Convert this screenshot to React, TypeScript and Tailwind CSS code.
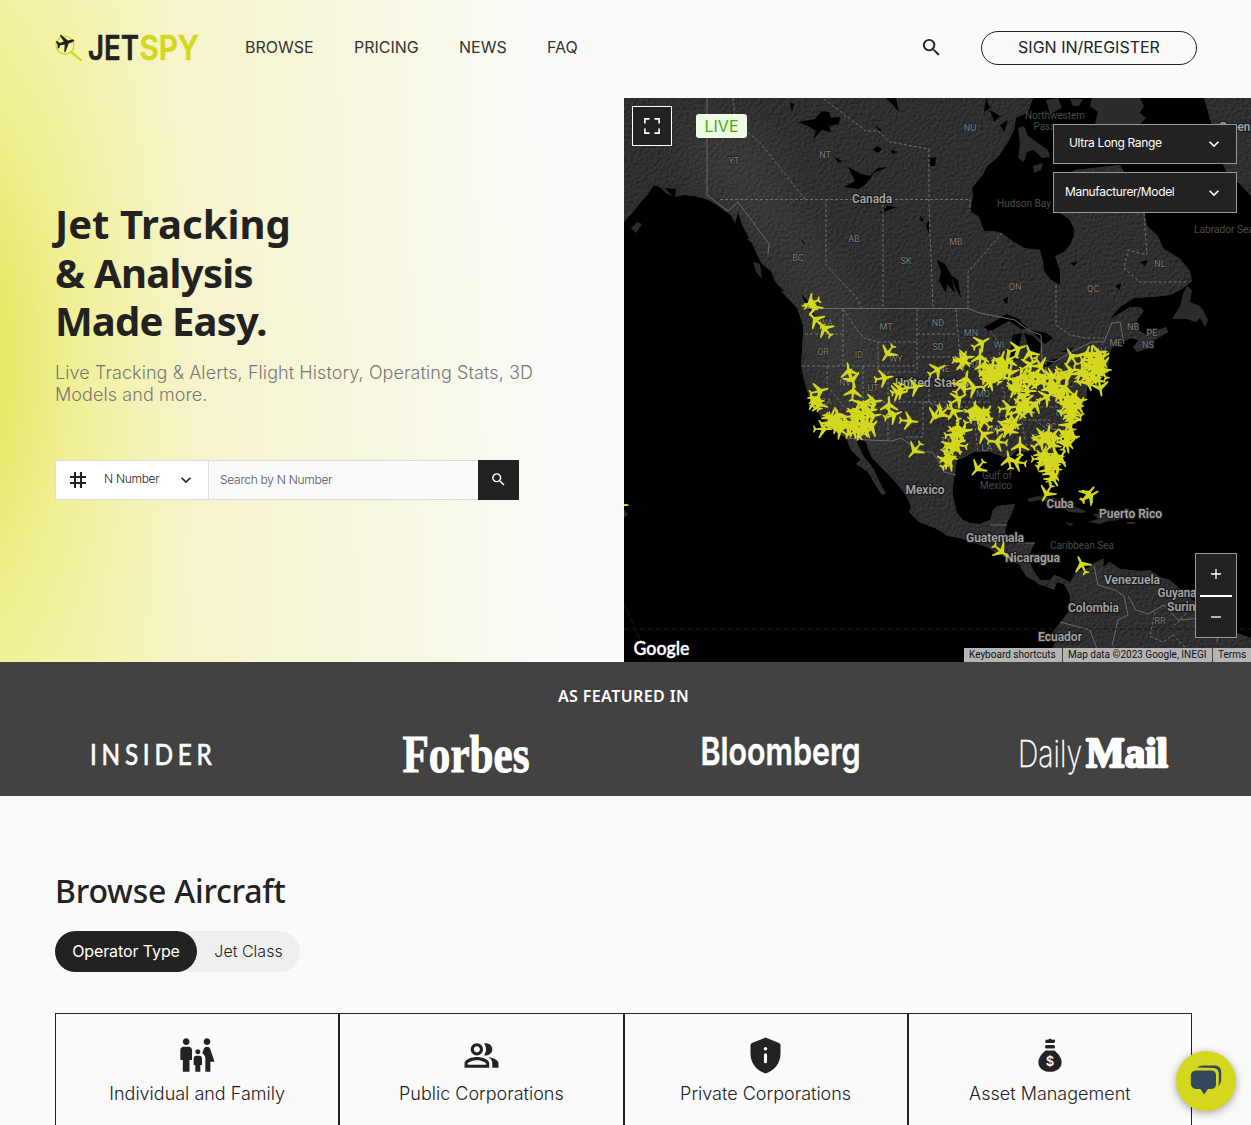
import React from "react";
import {
  MdSearch,
  MdTag,
  MdKeyboardArrowDown,
  MdFamilyRestroom,
  MdOutlinePeopleAlt,
} from "react-icons/md";

// Aircraft positions on the map canvas: x, y, heading in degrees.
const planes: [number, number, number][] = [
  [811, 303, 250], [814, 307, 95], [816, 320, 315], [825, 329, 320], [888, 353, 215],
  [849, 372, 350], [852, 379, 160], [853, 392, 5], [884, 378, 80], [898, 392, 200], [900, 390, 70],
  [915, 387, 80], [937, 370, 60], [819, 391, 75], [817, 399, 30], [815, 402, 330], [819, 404, 110],
  [823, 429, 90], [831, 418, 20], [834, 421, 50], [836, 419, 120], [837, 425, 200], [840, 423, 80],
  [841, 430, 310], [833, 424, 260], [838, 416, 340], [845, 422, 90], [847, 426, 60], [830, 422, 150],
  [852, 426, 20], [855, 429, 290], [857, 424, 0], [858, 431, 70], [862, 426, 120], [864, 430, 30], [866, 424, 200],
  [856, 411, 20], [862, 406, 60], [866, 404, 290], [868, 411, 80], [860, 416, 320], [873, 402, 80], [853, 416, 80],
  [872, 416, 80], [889, 406, 0], [893, 415, 70], [909, 421, 95], [915, 450, 220], [871, 428, 40],
  [935, 415, 210], [942, 413, 230], [954, 412, 330], [958, 399, 60], [961, 386, 40], [966, 380, 10], [973, 388, 80],
  [957, 429, 10], [954, 434, 80], [960, 434, 150], [956, 441, 200], [950, 446, 50], [958, 445, 280], [948, 457, 350],
  [953, 449, 110], [949, 462, 50], [946, 460, 180], [963, 430, 200],
  [963, 360, 20], [965, 358, 80], [962, 362, 100], [980, 358, 0], [981, 343, 60],
  [984, 367, 10], [988, 372, 80], [991, 368, 130], [986, 376, 200], [994, 376, 320], [989, 382, 45], [996, 372, 280],
  [999, 365, 80], [1001, 360, 20], [1005, 365, 60], [1009, 360, 240], [1000, 376, 110], [992, 379, 90], [1004, 370, 350],
  [1017, 349, 70], [1030, 354, 340], [1040, 365, 150], [1018, 386, 90], [1021, 378, 0], [1025, 376, 260],
  [1032, 377, 80], [1037, 374, 280], [1043, 379, 60], [1050, 378, 80], [1054, 376, 210], [1059, 378, 90], [1014, 389, 200],
  [1016, 382, 50], [1030, 382, 20], [1038, 382, 110], [1065, 376, 50], [1070, 371, 80],
  [1072, 357, 330], [1086, 355, 20], [1092, 355, 0], [1098, 353, 80], [1101, 360, 30], [1102, 364, 160], [1102, 371, 330],
  [1082, 372, 110], [1087, 366, 210], [1092, 368, 60], [1095, 362, 280], [1086, 377, 50], [1092, 376, 40], [1099, 373, 80],
  [1088, 382, 160], [1100, 387, 170], [1080, 374, 20], [1096, 379, 220], [1101, 358, 60], [1096, 370, 130], [1090, 360, 90],
  [1046, 397, 60], [1052, 391, 30], [1058, 392, 80], [1065, 389, 10], [1056, 385, 210], [1061, 397, 280], [1050, 386, 130],
  [1067, 398, 110], [1074, 399, 20], [1078, 401, 80], [1072, 406, 200], [1068, 409, 60], [1075, 410, 310],
  [1071, 414, 350], [1078, 405, 150], [1070, 402, 270], [1066, 405, 40], [1072, 421, 190], [1068, 426, 30], [1069, 433, 10],
  [1065, 436, 70], [1070, 437, 200], [1066, 442, 20], [1067, 444, 170], [1073, 416, 120],
  [1008, 408, 80], [1021, 396, 330], [1026, 401, 50], [1029, 408, 160], [1035, 405, 40], [1025, 411, 100], [1019, 411, 250], [1027, 391, 90],
  [974, 410, 10], [977, 415, 60], [981, 416, 130], [983, 419, 210], [979, 411, 80], [986, 414, 30], [984, 421, 320], [972, 414, 300],
  [984, 435, 320], [998, 442, 275], [1009, 422, 20], [1012, 426, 80], [1005, 428, 70], [1014, 421, 150], [1009, 430, 220],
  [1020, 446, 0], [1009, 460, 350], [1017, 462, 280], [978, 468, 220], [1042, 436, 80], [1046, 440, 150], [1048, 434, 10],
  [1053, 437, 280], [1040, 442, 50], [1052, 444, 220], [1043, 455, 20], [1048, 458, 80], [1055, 455, 100], [1060, 459, 30],
  [1045, 463, 60], [1051, 465, 200], [1056, 462, 340], [1041, 459, 90], [1052, 474, 20], [1053, 478, 150], [1048, 470, 260],
  [1047, 493, 210], [1088, 494, 40], [1090, 496, 60], [1001, 551, 130], [1082, 565, 335],
  [619, 505, 90], [1022, 404, 190], [1029, 365, 60], [1010, 372, 190],
];

const stateLabels: [string, number, number][] = [
  ["YT", 734, 164], ["NT", 825, 158], ["NU", 970, 131], ["AB", 854, 242], ["BC", 798, 261], ["SK", 906, 264],
  ["MB", 956, 245], ["ON", 1015, 290], ["QC", 1093, 292], ["NL", 1160, 267], ["NB", 1133, 330], ["PE", 1152, 336],
  ["NS", 1148, 348], ["ME", 1116, 346], ["MT", 886, 330], ["ND", 938, 326], ["SD", 938, 350], ["MN", 971, 336],
  ["WI", 999, 348], ["OR", 823, 355], ["ID", 859, 358], ["WY", 896, 362], ["NE", 944, 372], ["IA", 976, 368],
  ["NV", 845, 386], ["UT", 873, 391], ["CA", 826, 405], ["WA", 826, 326], ["MO", 983, 397], ["TX", 946, 444],
  ["MS", 997, 432], ["LA", 987, 451], ["SC", 1051, 430], ["GA", 1038, 441], ["NC", 1062, 416], ["NH", 1100, 354], ["RR", 1160, 624],
];

const countryLabels: [string, number, number, number][] = [
  ["Canada", 872, 202, 40], ["United States", 932, 386, 74], ["Mexico", 925, 493, 39], ["Cuba", 1060, 507, 27],
  ["Puerto Rico", 1130.5, 517, 63], ["Guatemala", 995, 541, 58], ["Nicaragua", 1032.5, 561, 55],
  ["Venezuela", 1132, 583, 56], ["Colombia", 1093.5, 611, 51], ["Ecuador", 1060, 640, 44],
  ["Guyana", 1177, 596, 39], ["Suriname", 1193, 610, 52], ["Greenland", 1246, 130, 54],
];

const waterLabels: [string, number, number, number][] = [
  ["Northwestern", 1055, 118, 60], ["Passages", 1055, 129, 43], ["Hudson Bay", 1024, 206, 54],
  ["Labrador Sea", 1224, 232, 60], ["Gulf of", 997, 478, 30], ["Mexico", 996, 488, 32], ["Caribbean Sea", 1082, 548, 64],
];

function FlightMap() {
  return (
    <svg viewBox="624 98 627 564" className="block h-[564px] w-[627px]" fontFamily="Roboto, sans-serif">
      <defs>
        <path
          id="plane"
          d="M0-11.5C1-11.5 1.3-9 1.3-7L1.5-3.5L10.5 3.6V5.5L1.5 1.8L1 8L4 10.4V11.8L0 10.6L-4 11.8V10.4L-1 8L-1.5 1.8L-10.5 5.5V3.6L-1.5-3.5L-1.3-7C-1.3-9-1-11.5 0-11.5Z"
        />
        <path
          id="land"
          d="M624 98H1033L1028 112L1016 118L1014 130L1008 142L1004 148L998 157L987 166L982 176L972 188L973 196L970 211L979 217L984 231L994 231L1002 233L1012 241L1024 248L1040 250L1043 262L1044 271L1051 280L1060 285L1060 270L1055 256L1064 252L1070 245L1074 236L1074 228L1069 219L1060 213V180L1075 170L1120 165L1144 211L1147 226L1158 236L1163 248L1180 259L1190 271L1192 281L1182 289L1170 295L1152 297L1134 298L1120 307L1109 320L1120 313L1130 307H1140L1144 311L1137 320L1136 329L1147 335L1166 327L1168 332L1155 340L1148 348L1137 352L1133 347L1139 340L1131 338L1122 342L1114 345L1108 354L1109 361L1108 369L1100 376L1093 385L1087 387L1087 396L1082 407L1080 417L1070 427L1065 433L1057 447L1054 453L1057 463L1060 473L1058 480L1053 479L1047 473L1042 466L1038 455L1034 450L1025 452L1017 450L1011 456L1004 457L990 452L974 452L963 458L957 460L955 473L953 485L953 497L957 513L963 520L970 523L980 524L990 520L993 510L997 506L1015 504L1012 513L1007 523L1005 530L1007 540L1017 543L1035 543L1031 550L1029 560L1032 568L1040 580L1050 580L1054 575L1060 577L1070 582L1076 572L1088 568L1094 563L1100 560L1104 559L1103 567L1110 562L1120 569L1140 571L1150 570L1160 577L1170 580L1178 587L1184 593L1205 610L1237 633L1251 638V662H1048L1050 653L1055 643L1052 633L1060 623L1070 610L1070 595L1064 584L1057 582L1054 590L1045 586L1040 585L1035 581L1027 577L1022 570L1020 565L1004 557L987 547L975 543L960 538L948 536L937 529L919 522L909 512L911 507L907 497L898 485L887 473L880 466L872 458L868 449L866 442L856 438L857 443L864 457L870 464L874 470L882 487L886 493L882 495L874 483L871 477L867 471L856 464L861 460L851 450L846 438L837 433L828 424L821 417L811 403L806 387L804 380L801 365L802 351L803 335L803 325L797 308L781 291L775 281L771 271L762 264L757 255L752 243L742 235L735 223L731 215L722 209L714 203L706 199L695 196L684 195L674 197L666 193L660 187L654 185L648 194L640 203L633 212L624 222Z"
        />
        <clipPath id="landClip">
          <use href="#land" />
          <path d="M1204 98L1212 125L1219 155L1226 171L1240 184L1251 196V98Z" />
        </clipPath>
        <filter id="relief" x="0" y="0" width="100%" height="100%" colorInterpolationFilters="sRGB">
          <feTurbulence type="fractalNoise" baseFrequency="0.34" numOctaves="3" seed="7" />
          <feColorMatrix type="matrix" values="0 0 0 0 0  0 0 0 0 0  0 0 0 0 0  1 0 0 0 0" />
          <feDiffuseLighting surfaceScale="0.9" diffuseConstant="1.05" lightingColor="#3e3e3e">
            <feDistantLight azimuth="225" elevation="48" />
          </feDiffuseLighting>
        </filter>
        <filter id="shade" x="-30%" y="-30%" width="160%" height="160%">
          <feGaussianBlur stdDeviation="22" />
        </filter>
      </defs>
      <rect x="624" y="98" width="627" height="564" fill="#000" />
      <g clipPath="url(#landClip)">
        <rect x="624" y="98" width="627" height="564" fill="#2c2c2c" />
        <rect x="624" y="98" width="627" height="564" filter="url(#relief)" opacity="0.85" />
        {/* Western mountain belt */}
        <path d="M680 110L760 130L800 220L880 340L900 480L830 400L790 260L700 180Z" fill="#fff" opacity="0.06" filter="url(#shade)" />
      </g>
      <g fill="#2c2c2c">
        <path d="M1187 286L1192 290L1190 302L1200 306L1204 312L1208 320L1205 327L1200 318L1196 322L1186 319L1172 319L1180 306L1183 294Z" />
        <path d="M1027 499L1038 496L1055 498L1070 505L1086 511L1084 513L1069 512L1055 504L1040 500L1030 502Z" />
        <path d="M1093 514L1108 514L1120 520L1108 521L1100 524L1088 522L1098 519Z" />
        <path d="M1065 522L1074 524L1070 526Z M1127 522H1135V524H1127Z" />
        <path d="M631 228L637 222L642 224L636 233Z M753 262L760 264L762 279L756 272Z" />
        <path d="M1018 128L1024 126L1028 136L1038 143L1048 150L1050 157L1042 158L1034 150L1027 152L1024 162L1018 158L1020 144Z M1033 166L1043 163L1041 170L1034 173Z" />
        <path d="M1092 98H1140L1144 106L1140 113L1146 118L1140 124H1095L1098 112L1090 106Z M1070 99H1083L1079 106H1073Z M1046 100L1058 98L1062 108L1050 114Z" />
        <path d="M624 510L628 514L624 518Z" />
      </g>
      {/* Lakes, fjords and inlets */}
      <g fill="#000">
        <path d="M798 122L815 119L822 111L829 112L831 118L840 117L839 124L829 126L831 132L822 130L813 139L816 131L808 126Z" />
        <path d="M848 167L861 174L870 176L878 168L888 167L874 173L866 184L859 189L844 187L855 181Z" />
        <path d="M835 157L842 161L838 163Z M876 125L883 132L878 130Z M886 98H896L899 112L894 106Z" />
        <path d="M879 214L887 206L897 207L889 210Z M929 158L936 157L935 166L930 166Z M926 226L929 219V234Z M920 216L924 220L921 222Z" />
        <path d="M937 260L945 264L951 275L955 293L947 284L946 293L939 281L941 272Z M951 275L958 280L961 298L955 287Z" />
        <path d="M984 327L997 320L1006 314L1019 319L1028 329L1021 329L1009 321L1000 326L990 332Z" />
        <path d="M1013 335L1022 333L1019 347L1017 360L1011 362L1011 345Z" />
        <path d="M1024 333L1033 336L1041 344L1039 355L1031 352L1027 342Z M1030 330L1046 333L1053 338L1045 344Z" />
        <path d="M1037 367L1050 360L1061 358L1049 366Z M1060 352L1074 347L1070 352Z" />
        <path d="M801 294L810 303L816 319L807 308Z M665 188L676 189L675 199Z M738 212L742 225L749 238L745 241L735 224Z" />
        <path d="M765 272L785 292L790 294L775 288Z M1003 300L1008 297L1007 304Z M1115 286L1121 283L1120 290Z" />
        <path d="M790 102L794 104L792 112Z M873 150L877 146L882 149L878 153Z M891 150L898 152L892 154Z M801 238L806 245L803 243Z M990 110L1000 116L994 122Z M986 98L990 108L984 112Z M1000 125L1008 120L1004 132Z M1070 263L1078 262L1074 266Z M1140 262L1148 260L1145 266Z" />
      </g>
      {/* Administrative borders */}
      <g fill="none" stroke="#6b6b6b" strokeWidth="1">
        <path d="M707 98V195L728 211L738 202L758 229L769 244L768 255" />
        <path d="M804 308.5H968L980 313L1000 317L1015 320L1028 330L1041 335L1042 360L1054 362L1075 350L1092 342H1104L1112 323L1120 322L1124 344" />
        <path d="M846 438L868 440L892 441L901 438L914 447L925 452H932L938 460L944 472L956 475" />
        <path d="M1094 566L1098 585L1115 590L1124 596L1128 615L1118 620L1112 646 M1060 622L1090 630L1098 652 M1128 596L1136 610L1148 614L1164 605L1178 620L1204 618L1220 628L1217 642" />
        <path d="M990 525H1007 M1017 543L1035 543" />
      </g>
      <g fill="none" stroke="#707070" strokeWidth="1" strokeDasharray="3 2">
        <path d="M720 199.5H970V211 M826 199V265L857 298L862 310 M883 199V308 M929 149V205L933 308 M824 99L866 131H878L890 142L929 149 M733 98L735 120L762 145L788 178L805 199" />
        <path d="M1002 233L968 272V308 M1056 285V325L1070 335L1085 338H1104 M1144 213L1147 255L1128 250L1124 268L1140 282H1186" />
        <path d="M843 309V334L803 334 M843 334V366 M802 366H918 M827 366V386L853 417 M843 309L857 330L864 338L878 342V372 M878 342H917V309 M917 334H956 M956 309L960 358 M917 357H960 M917 342V372 M878 372H917 M863 366V401 M853 402H990 M888 372V441 M923 402V437H906" />
        <path d="M929 374V402 M929 386H973 M960 358H993 M960 358L969 385L973 402 M973 408L978 452 M990 330L1000 345L998 375L1005 395L998 420V450 M1012 365L1013 395L1005 407 M1027 366V390 M1005 407H1064 M1013 420H1050 M1020 407L1025 440 M1035 420L1055 435 M1025 445H1055 M1046 362V375H1085 M1050 390L1075 386 M950 407H973 M925 402L950 409" />
        <path d="M1155 612L1150 636L1163 642L1173 635L1188 650 M1190 610L1175 625" />
      </g>
      <path d="M624 629H1251" stroke="#161616" strokeDasharray="5 3" />
      <path d="M624 604L650 662" stroke="#1a1a1a" strokeDasharray="6 2" fill="none" />
      <g fontSize="10" fill="#4b4b4b" textAnchor="middle">
        {waterLabels.map(([t, x, y, w]) => (
          <text key={t + x} x={x} y={y + 0.5} textLength={w} lengthAdjust="spacingAndGlyphs">{t}</text>
        ))}
      </g>
      <g fontSize="9" fill="#7c7c7c" stroke="#222" strokeWidth="1.5" paintOrder="stroke" textAnchor="middle">
        {stateLabels.map(([t, x, y]) => (
          <text key={t} x={x} y={y}>{t}</text>
        ))}
      </g>
      <g fontSize="12" fontWeight="600" fill="#a5a5a5" stroke="#1b1b1b" strokeWidth="2.5" paintOrder="stroke" textAnchor="middle">
        {countryLabels.map(([t, x, y, w]) => (
          <text key={t} x={x} y={y + 0.5} textLength={w} lengthAdjust="spacingAndGlyphs">{t}</text>
        ))}
      </g>
      <g fill="#d3d81f">
        {planes.map(([x, y, r], i) => (
          <use key={i} href="#plane" transform={`translate(${x} ${y}) rotate(${r}) scale(.86)`} />
        ))}
      </g>
      <text x="633.5" y="654.5" fontFamily="Lato, sans-serif" fontSize="18.5" fontWeight="600" fill="#fff" stroke="#fff" strokeWidth=".3" textLength="56" lengthAdjust="spacingAndGlyphs">
        Google
      </text>
    </svg>
  );
}

function Logo() {
  return (
    <svg viewBox="0 0 146 30" className="h-[30px] w-[146px] overflow-visible">
      <circle cx="10" cy="13.2" r="9" fill="none" stroke="#d3d81f" strokeWidth="1.3" />
      <path d="M15.5 19.5L26.5 28.5" stroke="#d3d81f" strokeWidth="2.3" />
      <path
        transform="translate(10.8 10.6) rotate(75) scale(.8)"
        fill="#222"
        d="M0-11C1.5-11 1.7-9 1.7-7L2-3.2L11 3.2V5L2 2L1.4 7.6L4.6 10V11.8L0 10.6L-4.6 11.8V10L-1.4 7.6L-2 2L-11 5V3.2L-2-3.2L-1.7-7C-1.7-9-1.5-11 0-11Z"
      />
      <text x="33" y="28" fontFamily="Inter, sans-serif" fontWeight="600" fontSize="34.500" fill="#222" stroke="#222" strokeWidth=".5" textLength="51" lengthAdjust="spacingAndGlyphs">JET</text>
      <text x="84.5" y="28" fontFamily="Inter, sans-serif" fontWeight="600" fontSize="34.500" fill="#d3d81f" stroke="#d3d81f" strokeWidth=".5" textLength="59.5" lengthAdjust="spacingAndGlyphs">SPY</text>
    </svg>
  );
}

function ShieldInfo() {
  return (
    <svg viewBox="0 0 32 38" className="h-[37px] w-[31px]" fill="#222">
      <path d="M16 .5L30 6Q31.5 6.7 31.5 8.5V17C31.5 27 25 35 16 37.5C7 35 .5 27 .5 17V8.5Q.5 6.7 2 6Z" />
      <circle cx="16" cy="12" r="1.8" fill="#fafafa" />
      <path d="M16 18.2V25.5" stroke="#fafafa" strokeWidth="3.2" strokeLinecap="round" />
    </svg>
  );
}

function MoneyBag() {
  return (
    <svg viewBox="0 0 24 34" className="h-[34px] w-[24px]" fill="#222">
      <path d="M8 1.5Q10 2.4 12 .2Q14 2.4 17 1.5Q17.5 3.5 16.2 5H7.6Q6.6 3.5 8 1.5Z" />
      <rect x="7" y="7" width="10" height="3.6" rx="1.6" />
      <path d="M7.5 12.4H16.5C20 15.5 23.6 19.5 23.6 24.2C23.6 30 18.8 33.8 12 33.8S.4 30 .4 24.2C.4 19.5 4 15.5 7.5 12.4Z" />
      <text x="12" y="27.8" textAnchor="middle" fontFamily="Inter, sans-serif" fontWeight="600" fontSize="13" fill="#fafafa">$</text>
    </svg>
  );
}

const nav = [
  { label: "BROWSE", cls: "w-[69px]" },
  { label: "PRICING", cls: "w-[65px]" },
  { label: "NEWS", cls: "w-12" },
  { label: "FAQ", cls: "w-8" },
];

const cards = [
  { label: "Individual and Family", icon: <MdFamilyRestroom size={40} /> },
  { label: "Public Corporations", icon: <MdOutlinePeopleAlt size={37} /> },
  { label: "Private Corporations", icon: <ShieldInfo /> },
  { label: "Asset Management", icon: <MoneyBag /> },
];

export default function App() {
  return (
    <div className="relative h-[1125px] w-[1251px] overflow-hidden bg-[#fafafa] font-[Inter,sans-serif] text-[#222]">
      <div className="flex h-[662px] flex-col bg-[radial-gradient(ellipse_300px_520px_at_-90px_360px,rgba(218,220,50,0.8)_0%,rgba(222,223,62,0.62)_30%,rgba(230,231,90,0.3)_55%,rgba(238,238,120,0.1)_78%,rgba(240,240,120,0)_100%),linear-gradient(88deg,#f3f3a4_0px,#f4f3ae_80px,#f6f4ca_200px,#f7f6d9_320px,#f8f8e6_430px,#fafaf8_550px,#fafafa_600px)]">
        <header className="flex h-[98px] shrink-0 items-center pr-[54px] pb-1 pl-[55px]">
          <Logo />
          <nav className="ml-11 flex gap-10 text-[16px] text-[#333]">
            {nav.map((n) => (
              <a key={n.label} className={`${n.cls} whitespace-nowrap`}>{n.label}</a>
            ))}
          </nav>
          <div className="mt-0.5 ml-auto flex items-center">
            <MdSearch size={23} className="mb-px" />
            <button className="ml-[38px] h-[34px] w-[216px] rounded-full border border-[#222] pb-0.5 text-[16px] leading-none">
              SIGN IN/REGISTER
            </button>
          </div>
        </header>
        <div className="flex h-[564px]">
          <section className="w-[624px] pt-[102px] pl-[55px]">
            <h1 className="font-['Noto_Sans',sans-serif] text-[40px] leading-[48.5px] font-bold">
              <span className="block">Jet Tracking</span>
              <span className="block tracking-[-0.7px]">&amp; Analysis</span>
              <span className="block tracking-[-0.85px]">Made Easy.</span>
            </h1>
            <p className="mt-4 w-[500px] text-[18px] leading-[22px] font-light tracking-[0.08px] text-[#777]">
              Live Tracking &amp; Alerts, Flight History, Operating Stats, 3D Models and more.
            </p>
            <div className="mt-[54px] flex h-10 w-[464px] text-[12px] font-light">
              <div className="flex w-[154px] items-center border border-[#ddd] bg-white">
                <MdTag size={24} className="ml-[10px]" />
                <span className="ml-[14px] w-[72px] pb-0.5 tracking-[-0.3px]">N Number</span>
                <MdKeyboardArrowDown size={20} />
              </div>
              <div className="flex flex-1 items-center border-y border-[#ddd] bg-[#fafafa] pl-[11px] tracking-[-0.28px] text-[#555]">Search by N Number</div>
              <button className="flex w-[41px] items-center justify-center bg-[#222] text-white">
                <MdSearch size={17} />
              </button>
            </div>
          </section>
          <section className="relative h-[564px] w-[627px] overflow-hidden">
            <FlightMap />
            <button className="absolute top-2 left-2 flex h-10 w-10 items-center justify-center border border-white bg-[#222] text-white">
              <svg viewBox="0 0 16 16" className="h-4 w-4" fill="none" stroke="#fff" strokeWidth="1.6">
                <path d="M.9 5.5V.9H5.5 M10.5 .9H15.1V5.5 M15.1 10.5V15.1H10.5 M5.5 15.1H.9V10.5" />
              </svg>
            </button>
            <span className="absolute top-4 left-[72px] h-6 w-[51px] rounded-[3px] bg-[#effae6] text-center text-[16px] leading-[25px] text-[#3fae0c]">LIVE</span>
            <div className="absolute top-[26px] right-[14px] flex w-[184px] flex-col gap-2 text-[12px] tracking-[-0.35px] text-white">
              <div className="flex h-10 items-center justify-between border border-[#999] bg-[#222] pr-[12px] pl-[15px]">
                <span className="pb-0.5">Ultra Long Range</span>
                <MdKeyboardArrowDown size={20} />
              </div>
              <div className="flex h-[41px] items-center justify-between border border-[#999] bg-[#222] pr-[12px] pl-[11px]">
                <span className="pb-0.5">Manufacturer/Model</span>
                <MdKeyboardArrowDown size={20} />
              </div>
            </div>
            <div className="absolute right-[14px] bottom-6 flex h-[85px] w-[42px] flex-col items-center border border-[#999] bg-[#222]">
              <span className="flex flex-1 items-center">
                <svg viewBox="0 0 10 10" className="h-[10px] w-[10px]"><path d="M5 0V10M0 5H10" stroke="#fff" strokeWidth="1.3" /></svg>
              </span>
              <span className="h-0.5 w-8 bg-white" />
              <span className="flex flex-1 items-center">
                <svg viewBox="0 0 10 10" className="h-[10px] w-[10px]"><path d="M0 5H10" stroke="#fff" strokeWidth="1.3" /></svg>
              </span>
            </div>
            <div className="absolute right-0 bottom-0 flex h-[14px] w-[287px] bg-[#b5b5b5] font-[Roboto,sans-serif] text-[10px] leading-[14px] whitespace-nowrap text-[#111]">
              <span className="w-[99px] border-r border-[#444] pl-[5px]">Keyboard shortcuts</span>
              <span className="w-[150px] border-r border-[#444] pl-[5px]">Map data ©2023 Google, INEGI</span>
              <span className="pl-[5px]">Terms</span>
            </div>
          </section>
        </div>
      </div>

      <section className="h-[134px] bg-[#424242] pt-[23px] text-white">
        <h2 className="pr-1 text-center font-['Noto_Sans',sans-serif] text-[16px] leading-[22px] font-semibold tracking-[0.4px]">AS FEATURED IN</h2>
        <div className="mt-[21px] flex h-12">
          <svg viewBox="0 0 312 48" className="h-12 w-[312px]">
            <text x="90" y="37" fill="#fff" fontFamily="Lato, sans-serif" fontSize="29" fontWeight="400" stroke="#fff" strokeWidth=".7" transform="translate(90 0) scale(.84 1) translate(-90 0)" textLength="145">INSIDER</text>
          </svg>
          <svg viewBox="312 0 312 48" className="h-12 w-[312px]">
            <text x="402.5" y="43.500" fill="#fff" stroke="#fff" strokeWidth="1" fontFamily="Liberation Serif, serif" fontSize="53" fontWeight="700" textLength="127" lengthAdjust="spacingAndGlyphs">Forbes</text>
          </svg>
          <svg viewBox="624 0 312 48" className="h-12 w-[312px]">
            <text x="700.5" y="36.5" fill="#fff" stroke="#fff" strokeWidth=".4" fontFamily="Inter, sans-serif" fontSize="38.5" fontWeight="600" textLength="160" lengthAdjust="spacingAndGlyphs">Bloomberg</text>
          </svg>
          <svg viewBox="936 0 312 48" className="h-12 w-[312px]">
            <text x="1018" y="39" fill="#fff" fontFamily="Inter, sans-serif" fontSize="37" fontWeight="200" stroke="#fff" strokeWidth=".3" textLength="64" lengthAdjust="spacingAndGlyphs">Daily</text>
            <text x="1086" y="39" fill="#fff" stroke="#fff" strokeWidth="2.6" strokeLinejoin="bevel" fontFamily="Liberation Serif, serif" fontSize="43" fontWeight="700" textLength="82" lengthAdjust="spacingAndGlyphs">Mail</text>
          </svg>
        </div>
      </section>

      <section className="pt-[73px] pl-[55px]">
        <h2 className="font-['Noto_Sans',sans-serif] text-[32px] leading-[44px] font-medium tracking-[-0.22px]">Browse Aircraft</h2>
        <div className="mt-[18px] flex h-[41px] w-[245px] rounded-full bg-[#efefef] text-[16px] leading-[41px] font-light">
          <span className="w-[142px] rounded-full bg-[#222] text-center font-normal tracking-[-0.1px] text-white">Operator Type</span>
          <span className="flex-1 text-center">Jet Class</span>
        </div>
        <div className="mt-[41px] flex h-[130px] w-[1137px] border border-[#222]">
          {cards.map((c, i) => (
            <div key={c.label} className={`flex flex-1 flex-col items-center pt-[21px] ${i < 3 ? "border-r-2 border-[#222]" : ""}`}>
              <div className="flex h-10 items-center">{c.icon}</div>
              <span className="mt-[7px] text-[18px] leading-6 font-light">{c.label}</span>
            </div>
          ))}
        </div>
      </section>

      <button className="absolute top-[1051px] left-[1176px] flex h-[60px] w-[60px] items-center justify-center rounded-full bg-[#d3d81f] shadow-[0_2px_8px_rgba(0,0,0,0.35)]">
        <svg viewBox="0 0 32 32" className="h-8 w-8" fill="#34495e">
          <path d="M6 5.5H21Q26 5.5 26 10.5V19Q26 23.5 21.5 24H18L14 29.5L10.5 24H6Q1.5 23.5 .8 19V10.5Q1 5.8 6 5.5Z" />
          <path d="M7 2.5Q9 .8 14 .6H25Q31 .8 31.2 7V14Q31 19 28.3 21.5Q29 18 28.8 9Q28.6 3.2 23.5 3Z" />
        </svg>
      </button>
    </div>
  );
}
